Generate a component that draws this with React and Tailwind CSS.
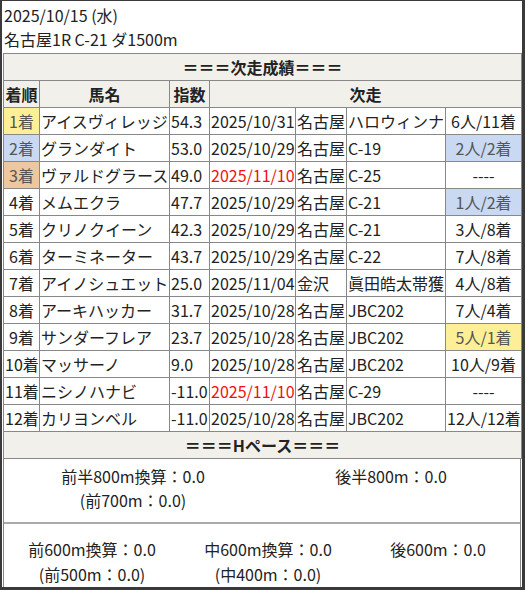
import React from 'react';

const rows = [
  { rank: '1着', rankBg: 'bg-[#fdee98]', name: 'アイスヴィレッジ', idx: '54.3', date: '2025/10/31', place: '名古屋', race: 'ハロウィンナ', res: '6人/11着' },
  { rank: '2着', rankBg: 'bg-[#c9d9f2]', name: 'グランダイト', idx: '53.0', date: '2025/10/29', place: '名古屋', race: 'C-19', res: '2人/2着', resBg: 'bg-[#c9d9f2]' },
  { rank: '3着', rankBg: 'bg-[#eec79f]', name: 'ヴァルドグラース', idx: '49.0', date: '2025/11/10', red: true, place: '名古屋', race: 'C-25', res: '----' },
  { rank: '4着', name: 'メムエクラ', idx: '47.7', date: '2025/10/29', place: '名古屋', race: 'C-21', res: '1人/2着', resBg: 'bg-[#c9d9f2]' },
  { rank: '5着', name: 'クリノクイーン', idx: '42.3', date: '2025/10/29', place: '名古屋', race: 'C-21', res: '3人/8着' },
  { rank: '6着', name: 'ターミネーター', idx: '43.7', date: '2025/10/29', place: '名古屋', race: 'C-22', res: '7人/8着' },
  { rank: '7着', name: 'アイノシュエット', idx: '25.0', date: '2025/11/04', place: '金沢', race: '眞田皓太帯獲', res: '4人/8着' },
  { rank: '8着', name: 'アーキハッカー', idx: '31.7', date: '2025/10/28', place: '名古屋', race: 'JBC202', res: '7人/4着' },
  { rank: '9着', name: 'サンダーフレア', idx: '23.7', date: '2025/10/28', place: '名古屋', race: 'JBC202', res: '5人/1着', resBg: 'bg-[#fdee98]' },
  { rank: '10着', name: 'マッサーノ', idx: '9.0', date: '2025/10/28', place: '名古屋', race: 'JBC202', res: '10人/9着' },
  { rank: '11着', name: 'ニシノハナビ', idx: '-11.0', date: '2025/11/10', red: true, place: '名古屋', race: 'C-29', res: '----' },
  { rank: '12着', name: 'カリヨンベル', idx: '-11.0', date: '2025/10/28', place: '名古屋', race: 'JBC202', res: '12人/12着' },
];

const td = 'border border-[#888] px-px py-px leading-6 whitespace-nowrap overflow-hidden';

export default function App() {
  return (
    <div
      className="w-[525px] h-[590px] bg-[#3a3a3a] pl-[2px] pt-[1px] pr-[3px] pb-[3px] text-[16px] text-[#222]"
      style={{ fontFamily: '"Noto Sans CJK JP", "Noto Sans", sans-serif' }}
    >
      <div className="h-full bg-white pl-px flex flex-col">
        {/* race info */}
        <div className="px-px pt-[2px] pb-[2px] leading-6">
          <div>2025/10/15 (水)</div>
          <div>名古屋1R C-21 ダ1500m</div>
        </div>

        <table className="table-fixed border-collapse w-[518px]">
          <colgroup>
            <col className="w-[36px]" />
            <col className="w-[130px]" />
            <col className="w-[40px]" />
            <col className="w-[86px]" />
            <col className="w-[51px]" />
            <col className="w-[99px]" />
            <col className="w-[76px]" />
          </colgroup>
          <tbody>
            <tr className="bg-[#f2f0eb] font-bold">
              <td colSpan={7} className={`${td} text-center`}>＝＝＝次走成績＝＝＝</td>
            </tr>
            <tr className="bg-[#f2f0eb] font-bold">
              <td className={`${td} text-center`}>着順</td>
              <td className={`${td} text-center`}>馬名</td>
              <td className={`${td} text-center`}>指数</td>
              <td colSpan={4} className={`${td} text-center`}>次走</td>
            </tr>
            {rows.map((r) => (
              <tr key={r.rank}>
                <td className={`${td} text-center ${r.rankBg ? `${r.rankBg} text-[#555]` : ''}`}>{r.rank}</td>
                <td className={td}>{r.name}</td>
                <td className={td}>{r.idx}</td>
                <td className={`${td} ${r.red ? 'text-[#f01010]' : ''}`}>{r.date}</td>
                <td className={td}>{r.place}</td>
                <td className={td}>{r.race}</td>
                <td className={`${td} text-center ${r.resBg ? `${r.resBg} text-[#555]` : ''}`}>{r.res}</td>
              </tr>
            ))}
            <tr className="bg-[#f2f0eb] font-bold">
              <td colSpan={7} className={`${td} text-center`}>＝＝＝Hペース＝＝＝</td>
            </tr>
          </tbody>
        </table>

        {/* pace */}
        <div className="w-[518px] flex-1 border-x border-[#888] flex flex-col">
          <div className="grid grid-cols-2 pt-[5px] pb-[10px] leading-6 text-center">
            <div>
              <div>前半800m換算：0.0</div>
              <div>(前700m：0.0)</div>
            </div>
            <div>
              <div>後半800m：0.0</div>
            </div>
          </div>
          <div className="h-[2px] bg-[#aaa]" />
          <div className="grid grid-cols-[176px_176px_1fr] pt-[13px] leading-[25px] text-center">
            <div>
              <div>前600m換算：0.0</div>
              <div>(前500m：0.0)</div>
            </div>
            <div>
              <div>中600m換算：0.0</div>
              <div>(中400m：0.0)</div>
            </div>
            <div>
              <div>後600m：0.0</div>
            </div>
          </div>
        </div>
      </div>
    </div>
  );
}
